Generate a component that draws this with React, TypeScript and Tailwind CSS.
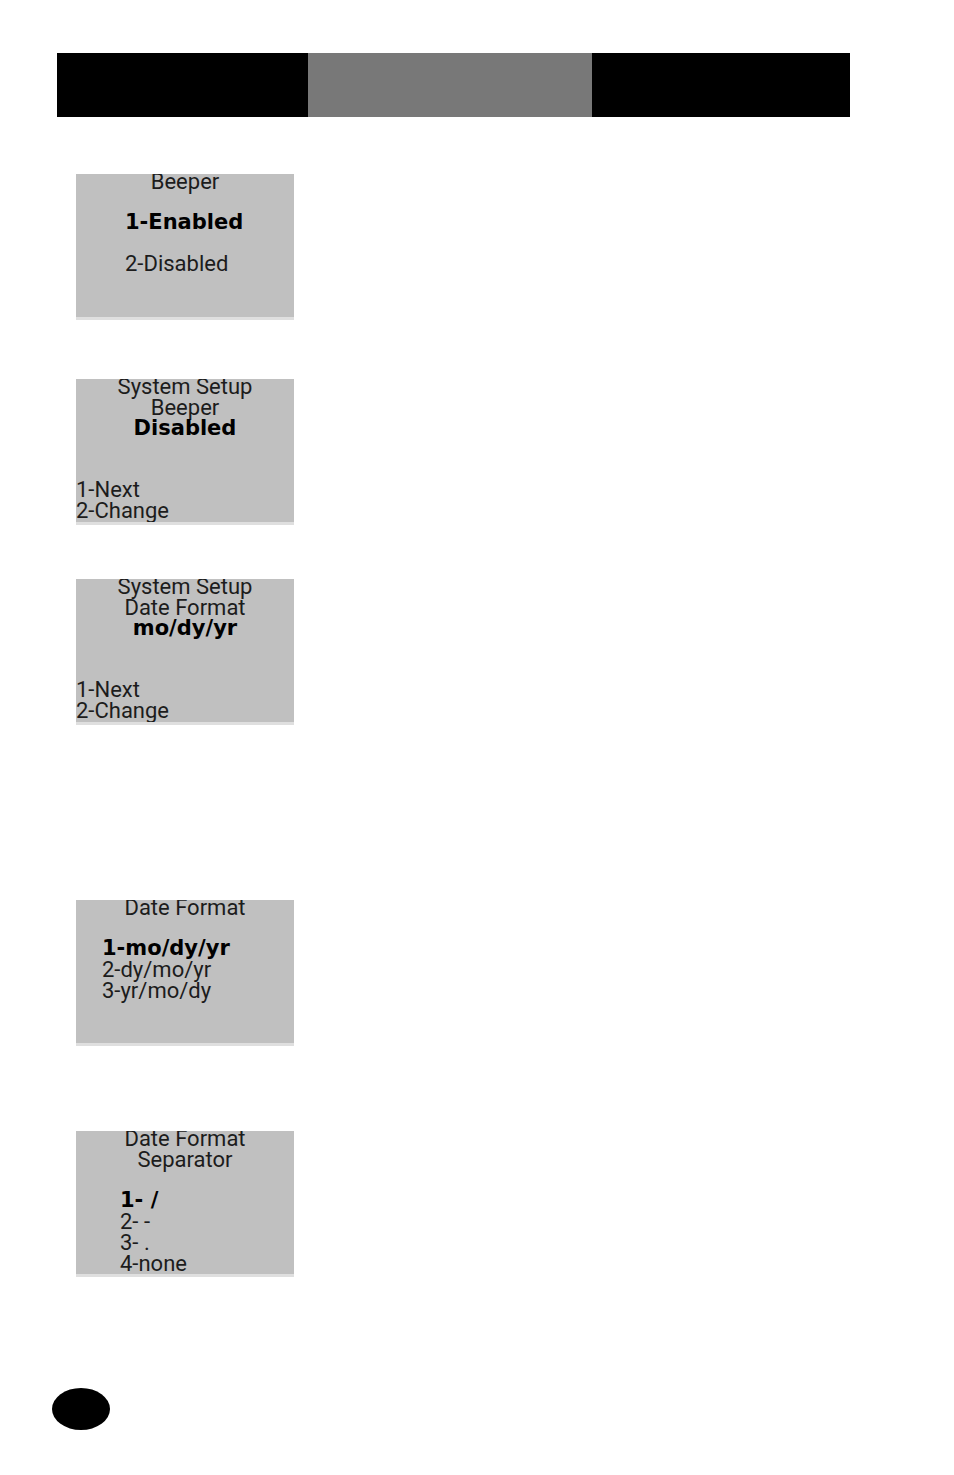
import type { ReactNode } from "react";

const strong = "font-['DejaVu_Sans',sans-serif] text-[21px] leading-[21px] font-bold text-black";

function Screen({ label, className = "", children }: { label: string; className?: string; children: ReactNode }) {
  return (
    <section
      aria-label={label}
      className={`w-[218px] overflow-hidden border-b-3 border-[#dfdfdf] bg-[#c0c0c0] ${className}`}
    >
      <div className="-mt-[3px] min-h-[146px] whitespace-pre">{children}</div>
    </section>
  );
}

function Title({ children }: { children: ReactNode }) {
  return <h2 className="text-center">{children}</h2>;
}

function Value({ children }: { children: ReactNode }) {
  return <p className={`text-center ${strong}`}>{children}</p>;
}

function Actions() {
  return (
    <ul className="mt-10">
      <li>1-Next</li>
      <li>2-Change</li>
    </ul>
  );
}

export default function App() {
  return (
    <main className="min-h-screen bg-white pt-[53px] pb-11 pl-[57px] font-['Roboto',sans-serif] text-[22px] leading-[21px] text-[#1c1c1c]">
      <header className="mr-[104px] flex h-16">
        <div className="grow-[251] bg-black" />
        <div className="grow-[284] bg-[#787878]" />
        <div className="grow-[258] bg-black" />
      </header>

      <div className="pt-[57px] pl-[19px]">
        <Screen label="Beeper options">
          <Title>Beeper</Title>
          <ul className="mt-5 pl-[49px]">
            <li className={strong}>1-Enabled</li>
            <li className="mt-5">2-Disabled</li>
          </ul>
        </Screen>

        <Screen label="Beeper setup" className="mt-[59px]">
          <Title>System Setup</Title>
          <Title>Beeper</Title>
          <Value>Disabled</Value>
          <Actions />
        </Screen>

        <Screen label="Date format setup" className="mt-[54px]">
          <Title>System Setup</Title>
          <Title>Date Format</Title>
          <Value>mo/dy/yr</Value>
          <Actions />
        </Screen>

        <Screen label="Date format options" className="mt-[175px]">
          <Title>Date Format</Title>
          <ul className="mt-5 pl-[26px]">
            <li className={strong}>1-mo/dy/yr</li>
            <li>2-dy/mo/yr</li>
            <li>3-yr/mo/dy</li>
          </ul>
        </Screen>

        <Screen label="Date separator options" className="mt-[85px]">
          <Title>Date Format</Title>
          <Title>Separator</Title>
          <ul className="mt-5 pl-11">
            <li className={strong}>1- /</li>
            <li>2- -</li>
            <li>3- .</li>
            <li>4-none</li>
          </ul>
        </Screen>
      </div>

      <footer className="mt-[111px] -ml-[5px] h-[42px] w-[58px] rounded-[50%] bg-black" />
    </main>
  );
}
